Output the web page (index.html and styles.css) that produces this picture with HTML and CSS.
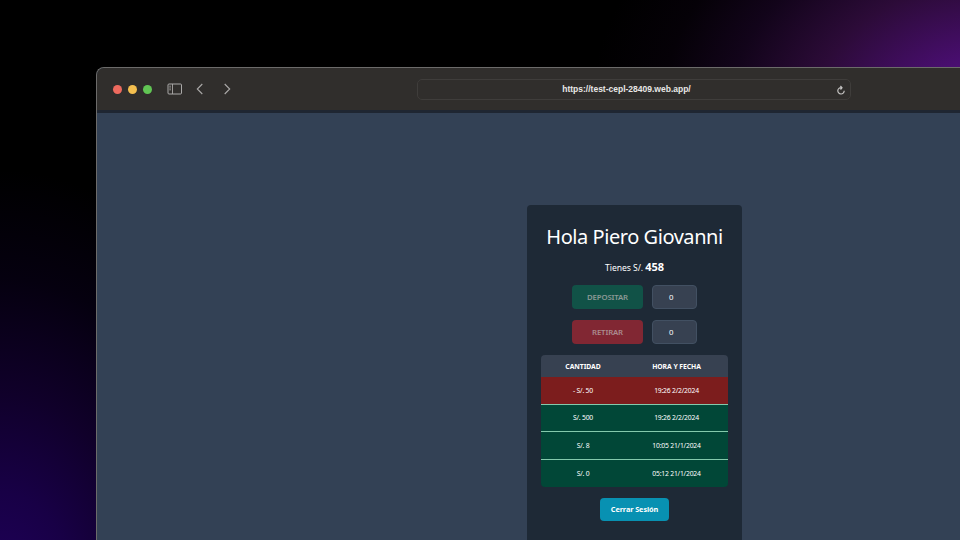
FILE: index.html
```html
<!DOCTYPE html>
<html lang="es">
<head>
<meta charset="utf-8">
<title>Hola Piero Giovanni</title>
<link rel="stylesheet" href="styles.css">
</head>
<body>
<div class="window">
  <header class="toolbar">
    <div class="lights"><i class="red"></i><i class="yellow"></i><i class="green"></i></div>
    <svg class="sidebar-icon" width="16" height="12" viewBox="0 0 16 12" fill="none" stroke="#aaa9a8"><rect x="1" y="1" width="13.5" height="10" rx="1"/><path d="M5.5 1v10M2.3 3.2h1.6M2.3 5h1.6M2.3 6.8h1.6" stroke-width=".9"/></svg>
    <svg class="back" width="8" height="12" viewBox="0 0 8 12" fill="none" stroke="#aaa9a8" stroke-width="1.1"><path d="M6.3 1 1.3 6l5 5"/></svg>
    <svg class="forward" width="8" height="12" viewBox="0 0 8 12" fill="none" stroke="#aaa9a8" stroke-width="1.1"><path d="m1.7 1 5 5-5 5"/></svg>
    <div class="address">
      <span>https://test-cepl-28409.web.app/</span>
      <svg width="10" height="10" viewBox="0 0 10 10" fill="none" stroke="#c4c3c2" stroke-width="1.2"><path d="M5.3 2.6A3.2 3.2 0 1 0 8.2 5.8M4.4 1 6 2.7 4.5 4.5"/></svg>
    </div>
  </header>
  <main class="page">
    <section class="card">
      <h1>Hola Piero Giovanni</h1>
      <p class="balance">Tienes S/. <b>458</b></p>
      <div class="row"><button class="deposit" disabled>DEPOSITAR</button><div class="field">0</div></div>
      <div class="row"><button class="withdraw" disabled>RETIRAR</button><div class="field">0</div></div>
      <div class="table">
        <div class="tr head"><span>CANTIDAD</span><span>HORA Y FECHA</span></div>
        <div class="tr out"><span>- S/. 50</span><span>19:26 2/2/2024</span></div>
        <div class="tr in"><span>S/. 500</span><span>19:26 2/2/2024</span></div>
        <div class="tr in"><span>S/. 8</span><span>10:05 21/1/2024</span></div>
        <div class="tr in"><span>S/. 0</span><span>05:12 21/1/2024</span></div>
      </div>
      <button class="logout">Cerrar Sesión</button>
    </section>
  </main>
</div>
</body>
</html>
```
FILE: styles.css
```css
* { box-sizing: border-box; margin: 0; padding: 0; }
body {
  width: 960px; height: 540px; overflow: hidden;
  padding: 67px 0 0 96px;
  font-family: "Noto Sans", "Open Sans", sans-serif;
  color: #fff;
  background:
    radial-gradient(ellipse 400px 290px at 990px 110px, #5c1286 0%, #490e70 18%, #2c0b38 44%, #12041a 65%, #050107 82%, transparent 100%),
    radial-gradient(ellipse 300px 430px at 0 600px, #20005c 0%, #180046 25%, #10002a 48%, #05000f 75%, transparent 100%),
    #000;
}
.window {
  width: 864px; height: 473px;
  border: 1px solid #6c6b6a;
  border-right: 0; border-bottom: 0;
  border-radius: 8px 0 0 0;
  overflow: hidden;
  background: #334155;
}
.toolbar {
  height: 45px;
  display: flex; align-items: center;
  padding-left: 15.5px;
  background: #302e2c;
  border-bottom: 3px solid #1f2632;
}
.lights { display: flex; gap: 5.5px; margin: 1px 15px 0 0; }
.lights i { width: 9.5px; height: 9.5px; border-radius: 50%; }
.red { background: #ed6a5e; }
.yellow { background: #f4bf4f; }
.green { background: #61c554; }
.back { margin-left: 13px; }
.forward { margin-left: 19px; }
.address {
  width: 434px; height: 21px; margin: 1px 0 0 186px;
  border: 1px solid #3f3d3b; border-radius: 5px;
  display: flex; align-items: center;
  padding: 0 4px 0 14px;
  font: bold 8.5px "Liberation Sans", sans-serif;
  color: #e9e8e7;
}
.address span { flex: 1; text-align: center; padding: 0 15px 2px 0; }
.page { padding: 92px 0 0 430px; }
.card {
  width: 215px; height: 335px;
  display: flex; flex-direction: column; align-items: center;
  background: #1e2936; border-radius: 4px 4px 0 0;
}
h1 { margin-top: 18px; font-size: 20px; line-height: 28px; font-weight: 400; letter-spacing: -.45px; white-space: nowrap; }
.balance { margin-top: 7px; height: 18px; line-height: 17px; font-size: 8.6px; letter-spacing: -.05px; }
.balance b { font-size: 11px; }
.row { display: flex; gap: 9px; margin-top: 9px; height: 24px; }
.row + .row { margin-top: 11px; }
button { font-family: inherit; border: 0; border-radius: 4px; }
.row button { width: 71px; height: 24px; font-size: 7.8px; font-weight: 600; letter-spacing: -.15px; color: #8b9996; }
.deposit { background: #115247; }
.withdraw { background: #812733; }
.row .withdraw { color: #ab8c90; }
.field {
  width: 45px; height: 24px; padding-left: 16px;
  border: 1px solid #425062; border-radius: 4px;
  background: #374151; font-size: 7.8px; line-height: 22px;
}
.table { width: 187px; margin-top: 11px; border-radius: 4px; overflow: hidden; }
.tr {
  display: grid; grid-template-columns: 84px 103px; height: 27.6px;
  align-items: center; text-align: center; font-size: 6.8px; letter-spacing: -.2px;
}
.head { height: 22px; background: #374151; font-weight: 700; letter-spacing: -.05px; }
.out { background: #7c1d1d; }
.in { background: #014737; }
.tr + .tr:not(:last-child) { border-bottom: 1px solid #84c9ac; }
.logout { margin-top: 11px; padding-bottom: 1px; width: 69px; height: 23px; background: #0891b2; color: #fff; font-size: 7.3px; font-weight: 700; letter-spacing: -.08px; }
```
